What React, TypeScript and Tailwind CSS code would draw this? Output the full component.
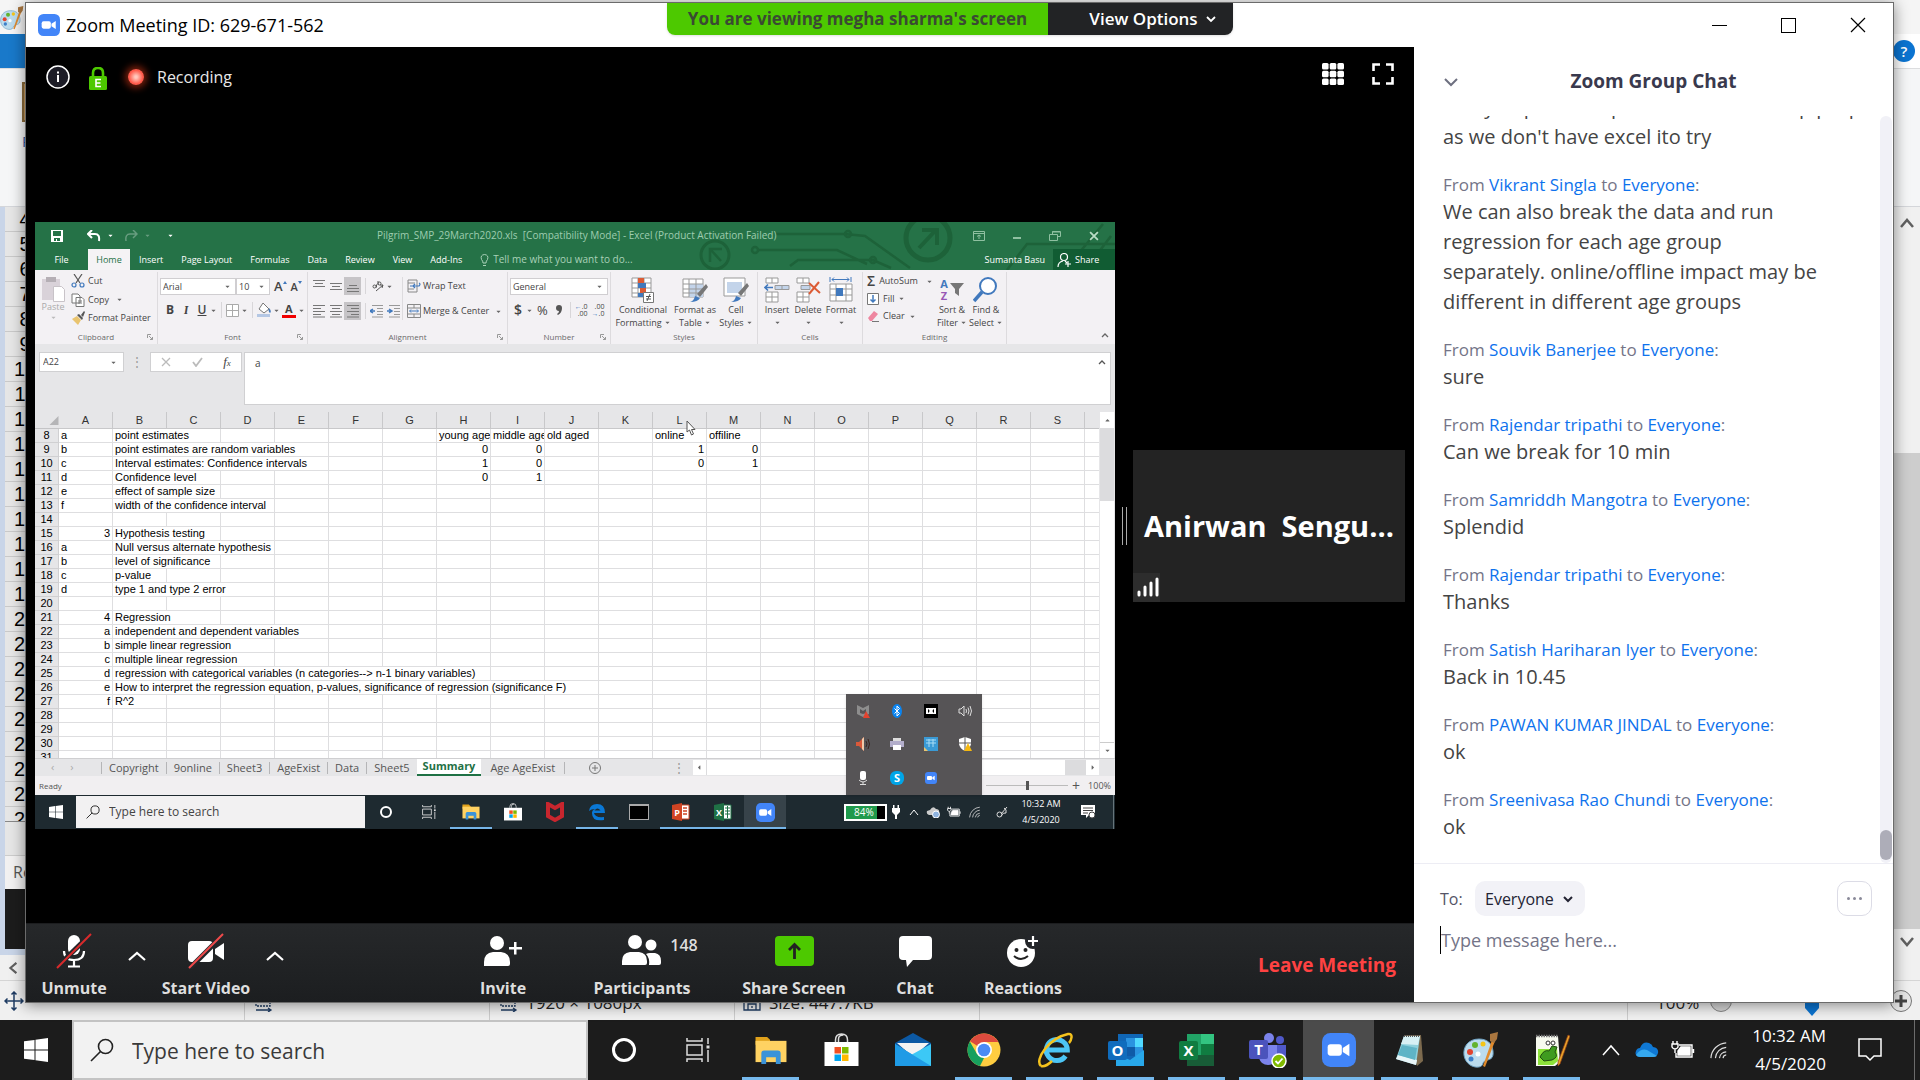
import React from "react";
import { FaCaretDown } from "react-icons/fa";

type Kids = { children?: React.ReactNode; className?: string };

const UI = "font-['Open_Sans','Noto_Sans',sans-serif]";

/* ---------- shared icons ---------- */

function ZoomLogo({ className = "" }: { className?: string }) {
  return (
    <svg viewBox="0 0 36 36" className={className} aria-hidden="true">
      <rect width="36" height="36" rx="9" fill="#4285f8" />
      <rect x="6" y="12" width="15" height="12" rx="3" fill="#fff" />
      <path d="M22 16l7-4.500v13L22 20z" fill="#fff" />
    </svg>
  );
}

function WindowsLogo({ className = "" }: { className?: string }) {
  return (
    <svg viewBox="0 0 24 24" className={className} fill="#fff" aria-hidden="true">
      <path d="M0 3.300L10.500 1.900V11.500H0zM11.500 1.700L24 0V11.500H11.500zM0 12.500H10.500V22.100L0 20.700zM11.500 12.500H24V24L11.500 22.300z" />
    </svg>
  );
}

function SearchIcon({ className = "" }: { className?: string }) {
  return (
    <svg viewBox="0 0 24 24" className={className} fill="none" stroke="#222" strokeWidth="1.600" aria-hidden="true">
      <circle cx="15.500" cy="8.500" r="7" />
      <path d="M10.500 13.500L1 23" />
    </svg>
  );
}

function TaskViewIcon({ className = "" }: { className?: string }) {
  return (
    <svg viewBox="0 0 24 24" className={className} fill="none" stroke="#ddd" strokeWidth="1.500" aria-hidden="true">
      <path d="M1 0v3h15V0M1 24v-3h15v3M1 7h15v10H1zM22 0v6M22 12v12" />
      <path d="M20.500 9h3" strokeWidth="3" />
    </svg>
  );
}

function ExplorerIcon({ className = "" }: { className?: string }) {
  return (
    <svg viewBox="0 0 32 30" className={className} aria-hidden="true">
      <path d="M0 1h12l3 3v5H0z" fill="#e0a11b" />
      <path d="M0 5h32v22H0z" fill="#ffd262" />
      <path d="M6 29V18q0-3 3-3h14q3 0 3 3v11h-5v-7H11v7z" fill="#3b93d8" />
    </svg>
  );
}

function StoreIcon({ className = "" }: { className?: string }) {
  return (
    <svg viewBox="0 0 34 34" className={className} aria-hidden="true">
      <path d="M11 9V7q0-6 6-6t6 6v2M14 9V6q0-4 5-4" fill="none" stroke="#ddd" strokeWidth="1.500" />
      <path d="M0 9h34v24H0z" fill="#fff" />
      <path d="M10 14h6.500v6.500H10z" fill="#f25022" />
      <path d="M17.500 14H24v6.500h-6.500z" fill="#7fba00" />
      <path d="M10 21.500h6.500V28H10z" fill="#00a4ef" />
      <path d="M17.500 21.500H24V28h-6.500z" fill="#ffb900" />
    </svg>
  );
}

function MailIcon() {
  return (
    <svg viewBox="0 0 36 34" className="h-[34px] w-9" aria-hidden="true">
      <path d="M0 10L18 0l18 10v6H0z" fill="#0c59a4" />
      <path d="M2 10h32L18 24z" fill="#f3f3f3" />
      <path d="M0 11l36 22H0z" fill="#28a8ea" />
      <path d="M36 11v22H24L16 22z" fill="#3cc8f6" />
      <path d="M0 33V11l36 22z" fill="#1f9be6" />
    </svg>
  );
}

function ChromeIcon() {
  return (
    <svg viewBox="0 0 34 34" className="h-[34px] w-[34px]" aria-hidden="true">
      <circle cx="17" cy="17" r="16.500" fill="#ffcd40" />
      <path d="M17 17L3 8.200A16.500 16.500 0 0 1 31.400 9H17z" fill="#dd4b3e" />
      <path d="M2.800 8.500L10 21l7 4-4 8A16.500 16.500 0 0 1 2.800 8.500z" fill="#17a05e" />
      <circle cx="17" cy="17" r="8" fill="#fff" />
      <circle cx="17" cy="17" r="6.300" fill="#4a8af4" />
    </svg>
  );
}

function IEIcon() {
  return (
    <svg viewBox="0 0 36 36" className="h-9 w-9" fill="none" aria-hidden="true">
      <path d="M28.500 24a10.500 10.500 0 1 1 1.800-6H11" stroke="#4cc5f5" strokeWidth="5" />
      <path d="M4 34C-3 28 12 6 31 2c6-1 3 7 1 9" stroke="#f4c21d" strokeWidth="2.500" />
      <path d="M4 34c4 1 8-2 11-5" stroke="#f4c21d" strokeWidth="2.500" />
    </svg>
  );
}

function OutlookIcon() {
  return (
    <svg viewBox="0 0 36 34" className="h-[34px] w-9" aria-hidden="true">
      <path d="M10 1h25v30H10z" fill="#1066b5" />
      <path d="M18 5h9v9h-9z" fill="#2a93e0" />
      <path d="M27 5h8v9h-8z" fill="#50d9ff" />
      <path d="M18 14h9v9h-9z" fill="#0f5ba8" />
      <path d="M27 14h8v9h-8z" fill="#2a93e0" />
      <path d="M8 33V21l14 6 14-10v16z" fill="#28a8ea" />
      <rect y="8" width="19" height="19" rx="2" fill="#0f6cbd" />
      <text x="9.500" y="23" textAnchor="middle" fontSize="15" fontWeight="700" fill="#fff" fontFamily="Open Sans">O</text>
    </svg>
  );
}

function ExcelIcon() {
  return (
    <svg viewBox="0 0 36 34" className="h-[34px] w-9" aria-hidden="true">
      <path d="M8 1h14v32H8z" fill="#21a366" />
      <path d="M22 1h13v10H22z" fill="#33c481" />
      <path d="M22 11h13v11H22z" fill="#107c41" />
      <path d="M8 22h27v11H8z" fill="#185c37" />
      <rect y="8" width="19" height="19" rx="2" fill="#107c41" />
      <text x="9.500" y="23" textAnchor="middle" fontSize="15" fontWeight="700" fill="#fff" fontFamily="Open Sans">X</text>
    </svg>
  );
}

function TeamsIcon() {
  return (
    <svg viewBox="0 0 38 36" className="h-9 w-[38px]" aria-hidden="true">
      <circle cx="20" cy="6" r="5" fill="#7b83eb" />
      <circle cx="31" cy="8" r="4" fill="#5059c9" />
      <path d="M26 13h11v10q0 6-6 6h-5z" fill="#5059c9" />
      <path d="M10 13h18v12q-1 8-9 8-7 0-9-7z" fill="#7b83eb" />
      <rect y="8" width="19" height="19" rx="2" fill="#4b53bc" />
      <text x="9.500" y="23" textAnchor="middle" fontSize="15" fontWeight="700" fill="#fff" fontFamily="Open Sans">T</text>
      <circle cx="30" cy="29" r="7" fill="#7fba00" stroke="#fff" strokeWidth="1.500" />
      <path d="M26.500 29l2.500 2.500 4.500-5" stroke="#fff" strokeWidth="1.800" fill="none" />
    </svg>
  );
}

function NotepadIcon() {
  return (
    <svg viewBox="0 0 34 34" className="h-[34px] w-[34px]" aria-hidden="true">
      <path d="M12 2h16l2 26-6 5z" fill="#7c6a4e" />
      <path d="M11 3h16l-4 29L3 26z" fill="#8fd0dc" />
      <path d="M11 3h16l-2 9L8 11z" fill="#d7f0f4" />
      <path d="M3 26l20 6 1-5L5 22z" fill="#e9f6f8" />
      <path d="M9 12l15 3-2 12L5 22z" fill="#5fb4c6" />
      <path d="M11 3h16" stroke="#555" strokeWidth="2" strokeDasharray="1 1" />
    </svg>
  );
}

function PaletteIcon({ className = "" }: { className?: string }) {
  return (
    <svg viewBox="0 0 36 36" className={className} aria-hidden="true">
      <path d="M16 7C5 7 0 15 1 23s8 13 15 12c5-1 3-5 6-6 4-2 9-1 8-10C29 11 24 7 16 7z" fill="#bcdcee" stroke="#6fa3c4" />
      <circle cx="7" cy="20" r="3" fill="#e2432f" />
      <circle cx="12" cy="13" r="3" fill="#63b32e" />
      <circle cx="20" cy="12" r="2.500" fill="#f5c518" />
      <circle cx="8" cy="27" r="2.500" fill="#3d7fc8" />
      <circle cx="15" cy="22" r="2.500" fill="#fff" />
      <path d="M29 8l3 1-10 26-2-1z" fill="#e08a2c" />
      <path d="M27 2l8-2-1 7-3 4-4-2z" fill="#a9763f" />
    </svg>
  );
}

function NotepadPlusIcon() {
  return (
    <svg viewBox="0 0 36 34" className="h-[34px] w-9" aria-hidden="true">
      <path d="M2 3h22l2 26-5 4H2z" fill="#f7faef" />
      <path d="M2 3h22" stroke="#777" strokeWidth="2.500" strokeDasharray="1.500 1" />
      <path d="M4 16h19l1 12-5 4H4z" fill="#8ce23a" />
      <path d="M6 24q4-8 9-6l3-5 5 1-2 5q4 5-3 8l-8 1z" fill="#3f9b1f" stroke="#1f4d10" />
      <circle cx="14" cy="10" r="2" fill="#fff" stroke="#333" />
      <circle cx="19" cy="10" r="2" fill="#fff" stroke="#333" />
      <path d="M34 2l2 1-10 28-2 2v-4z" fill="#e9a32b" stroke="#8c3b12" strokeWidth=".7" />
    </svg>
  );
}

function WifiIcon({ className = "" }: { className?: string }) {
  return (
    <svg viewBox="0 0 20 20" className={className} fill="none" stroke="#ddd" strokeWidth="1.300" aria-hidden="true">
      <path d="M1 19A18 18 0 0 1 18 2M6 19A13 13 0 0 1 18 7M10.500 19A8 8 0 0 1 18 12M14.500 19a4 4 0 0 1 3.500-3.500" />
    </svg>
  );
}

function BatteryIcon({ className = "" }: { className?: string }) {
  return (
    <svg viewBox="0 0 24 20" className={className} fill="none" stroke="#fff" strokeWidth="1.400" aria-hidden="true">
      <path d="M8 5h13v12H5v-4M22.500 9v4" />
      <path d="M10 7h9v8H7V11z" fill="#fff" />
      <path d="M2 1v3M6 1v3M1 4h6v3q-1 2-3 2-2 0-3-2zM4 9v4" />
    </svg>
  );
}

function Caret({ className = "" }: { className?: string }) {
  return <FaCaretDown className={"h-[7px] w-[7px] shrink-0 text-[#666] " + className} aria-hidden="true" />;
}

/* ---------- shared Excel window ---------- */

function QuickBar() {
  return (
    <div className="flex h-[27px] items-center text-[#9fcdb0]">
      <div className="flex w-[300px] items-center pl-4 text-white">
        <button aria-label="Save">
          <svg viewBox="0 0 12 12" className="h-3 w-3" fill="#fff">
            <path fillRule="evenodd" d="M0 0h12v12H0zM2 1v5h8V1zM3 8v3h2V9h1v2h3V8z" />
          </svg>
        </button>
        <button aria-label="Undo" className="ml-6 flex items-center gap-1.5">
          <svg viewBox="0 0 14 12" className="h-3 w-[14px]" fill="none" stroke="#fff" strokeWidth="2">
            <path d="M5 0L1 4l4 4M1 4h7q5 0 4 7" />
          </svg>
          <Caret className="text-white" />
        </button>
        <button aria-label="Redo" className="ml-2.5 flex items-center gap-1.5 opacity-30">
          <svg viewBox="0 0 14 12" className="h-3 w-[14px]" fill="none" stroke="#fff" strokeWidth="1.500">
            <path d="M9 0l4 4-4 4M13 4H6q-5 0-4 7" />
          </svg>
          <Caret className="text-white" />
        </button>
        <button aria-label="Customize Quick Access Toolbar" className="ml-4">
          <Caret className="text-white" />
        </button>
      </div>
      <p className="flex-1 pl-[42px] text-[10px] whitespace-pre">Pilgrim_SMP_29March2020.xls  [Compatibility Mode] - Excel (Product Activation Failed)</p>
      <div className="flex w-[150px] items-center justify-between pr-4">
        <button aria-label="Ribbon Display Options" className="ml-2">
          <svg viewBox="0 0 12 10" className="h-2.5 w-3" fill="none" stroke="#8fc0a1">
            <path d="M.5.500h11v9H.5zM.5 2.500h11M6 8V4M4 5.500L6 4l2 1.500" />
          </svg>
        </button>
        <button aria-label="Minimize" className="mt-1 h-[2px] w-2 bg-[#8fc0a1]" />
        <button aria-label="Restore">
          <svg viewBox="0 0 12 11" className="h-[11px] w-3" fill="none" stroke="#8fc0a1">
            <path d="M.5 4.500h8v6h-8zM3.500 4.500v-3h8v5h-3M3 2h8" />
          </svg>
        </button>
        <button aria-label="Close Excel">
          <svg viewBox="0 0 9 9" className="h-2.5 w-2.5" stroke="#b9dcc6" strokeWidth="1.600">
            <path d="M1 1l7 7M8 1L1 8" />
          </svg>
        </button>
      </div>
    </div>
  );
}

const ribbonTabs = ["Insert", "Page Layout", "Formulas", "Data", "Review", "View", "Add-Ins"];

function TabBar() {
  return (
    <div className="flex h-[21px] items-center text-[9px] text-white">
      <button className="w-[53px] text-center">File</button>
      <button className="h-full w-[42px] bg-[#f5f3f5] text-[#1f7145]">Home</button>
      <div className="flex items-center gap-[18px] pl-[9px]">
        {ribbonTabs.map((t) => (
          <button key={t}>{t}</button>
        ))}
      </div>
      <label className="flex flex-1 items-center gap-1 pl-[18px] text-[10px]">
        <svg viewBox="0 0 9 12" className="h-3 w-[9px]" fill="none" stroke="#a9d1b8">
          <path d="M3 9Q3 7 1.500 5.500 0 1 4.500.500 9 1 7.500 5.500 6 7 6 9zM3 11.500h3" />
        </svg>
        <span className="sr-only">Tell me</span>
        <input className="w-40 bg-transparent placeholder:text-[#a9d1b8]" placeholder="Tell me what you want to do..." />
      </label>
      <span className="pr-2">Sumanta Basu</span>
      <button className="flex h-full w-[62px] items-center gap-1 bg-[#115c33] pl-1">
        <svg viewBox="0 0 14 14" className="h-3.5 w-3.5" fill="none" stroke="#fff" strokeWidth="1.200">
          <circle cx="7" cy="4" r="3.500" />
          <path d="M1 14q0-5 5-6M8 8l2 2M11 8v6M8 11h6" />
        </svg>
        Share
      </button>
    </div>
  );
}

function Circuit() {
  return (
    <svg viewBox="0 0 480 48" className="absolute top-0 right-0 h-12 w-[480px]" fill="none" stroke="#1d6239" strokeWidth="2.500" aria-hidden="true">
      <circle cx="80" cy="33" r="14" strokeWidth="3" />
      <path d="M75 40V27h12M76 28l10 11" />
      <circle cx="293" cy="16" r="22" strokeWidth="5" />
      <path d="M284 26l17-18M287 8h15v15" strokeWidth="4" />
      <path d="M140 12h70l20 2 45 32M122 28h80l30 14M155 44l8-6h75l18 8M372 48l20-26h88M430 48l38-46M450 48l26-34" />
      <circle cx="213" cy="12" r="3" />
      <circle cx="120" cy="28" r="3" />
      <circle cx="238" cy="38" r="3" />
    </svg>
  );
}

function Group({ label, width, launcher = true, children }: { label: string; width: string; launcher?: boolean; children: React.ReactNode }) {
  return (
    <div className={"flex shrink-0 flex-col border-r border-[#dddbde] " + width}>
      <div className="flex-1">{children}</div>
      <div className="relative flex h-[14px] items-center justify-center text-[8px] text-[#6a6a6a]">
        {label}
        {launcher && (
          <svg viewBox="0 0 6 6" className="absolute right-1 h-[6px] w-[6px]" fill="none" stroke="#999">
            <path d="M.5 4V.500H4M2 2l3.500 3.500M5.500 3v2.500H3" />
          </svg>
        )}
      </div>
    </div>
  );
}

function Lines({ kind }: { kind: string }) {
  const d: Record<string, string> = {
    top: "M0 1.500h12M2 4.500h8M0 7.500h12",
    mid: "M0 4.500h12M2 7.500h8M0 10.500h12",
    bot: "M2 6.500h8M0 9.500h12M0 12.500h12",
    left: "M0 1.500h12M0 4.500h8M0 7.500h12M0 10.500h8M0 13h12",
    center: "M0 1.500h12M2 4.500h8M0 7.500h12M2 10.500h8M0 13h12",
    right: "M0 1.500h12M4 4.500h8M0 7.500h12M4 10.500h8M0 13h12",
  };
  return (
    <svg viewBox="0 0 12 14" className="h-3.5 w-3" stroke="#777" aria-hidden="true">
      <path d={d[kind]} />
    </svg>
  );
}

function AlignButton({ kind, on = false }: { kind: string; on?: boolean }) {
  return (
    <button aria-label={"Align " + kind} className={"flex h-[18px] w-[17px] items-center justify-center " + (on ? "bg-[#c6c4c7]" : "")}>
      <Lines kind={kind} />
    </button>
  );
}

function Sep() {
  return <span className="h-4 w-px bg-[#d8d6d9]" />;
}

function BigButton({ icon, lines, width, last = true }: { icon: React.ReactNode; lines: string[]; width: string; last?: boolean }) {
  return (
    <button className={"flex flex-col items-center text-[9px] leading-[13px] whitespace-nowrap " + width}>
      <span className="flex h-[31px] items-center pt-1">{icon}</span>
      <span>{lines[0]}</span>
      <span className="flex h-[13px] items-center gap-0.5">
        {lines[1]}
        {last && <Caret />}
      </span>
    </button>
  );
}

function GridIcon({ kind }: { kind: string }) {
  return (
    <svg viewBox="0 0 26 26" className="h-[26px] w-[26px]" fill="none" aria-hidden="true">
      {kind === "cf" && (
        <g>
          <path d="M2 1h19v19H2zM2 6h19M2 11h19M2 16h19M8 1v19M14 1v19" stroke="#999" fill="#fff" />
          <path d="M8 1h6v5H8zM10 11h6v5h-6z" fill="#dc5b35" />
          <path d="M8 6h8v5H8zM8 16h5v4H8z" fill="#4179bd" />
          <path d="M13.500 15.500h10v10h-10z" fill="#fff" stroke="#777" />
          <path d="M16 19.500h5M16 22h5M20 17l-3 7" stroke="#555" />
        </g>
      )}
      {kind === "table" && (
        <g>
          <path d="M1 2h20v18H1z" fill="#fff" stroke="#999" />
          <path d="M7 7h14v13H7z" fill="#c3d4ea" />
          <path d="M1 7h20M1 12h20M1 16h20M7 2v18M14 2v18" stroke="#999" />
          <path d="M24 7l2 3-8 10-3-3z" fill="#777" />
          <path d="M8 25q4-1 5-6l5 2q-2 4-10 4z" fill="#4179bd" />
        </g>
      )}
      {kind === "cell" && (
        <g>
          <path d="M1 1h21v18H1z" fill="#fff" stroke="#999" />
          <path d="M4 5h15v11H4z" fill="#c3d4ea" />
          <path d="M24 6l2 3-8 10-3-3z" fill="#777" />
          <path d="M8 25q4-1 5-6l5 2q-2 4-10 4z" fill="#4179bd" />
        </g>
      )}
      {kind === "insert" && (
        <g stroke="#999">
          <path d="M2 1h12v5H2zM8 1v5M2 15h12v10H2zM8 15v10M2 20h12" fill="#fff" />
          <path d="M11 8.500h14v4H11zM18 8v5" fill="#c3d4ea" />
          <path d="M9 10.500H1M4 7.500l-3 3 3 3" stroke="#4179bd" strokeWidth="1.600" />
        </g>
      )}
      {kind === "delete" && (
        <g stroke="#999">
          <path d="M2 1h12v5H2zM8 1v5M2 15h12v10H2zM8 15v10M2 20h12" fill="#fff" />
          <path d="M6 8.500h9v4H6z" fill="#c3d4ea" />
          <path d="M14 6l11 10M24 5L14 17" stroke="#dc5b35" strokeWidth="2" />
        </g>
      )}
      {kind === "format" && (
        <g stroke="#999">
          <path d="M2 7h22v17H2zM2 12h22M2 18h22M8 7v17M18 7v17" fill="#fff" />
          <path d="M8 11h7v8H8z" fill="#4179bd" stroke="none" />
          <path d="M2 0v5M23 0v5M4 2.500h17M6 .5L4 2.500l2 2M19 .5l2 2-2 2" stroke="#4179bd" />
        </g>
      )}
      {kind === "find" && (
        <g stroke="#4179bd">
          <circle cx="15" cy="9" r="8" strokeWidth="2" fill="#fff" />
          <path d="M9 15l-8 9" strokeWidth="3.500" />
        </g>
      )}
    </svg>
  );
}

function SortIcon() {
  return (
    <span className="flex items-center gap-0.5">
      <span className="flex flex-col text-[11px] leading-[12px] font-bold">
        <span className="text-[#4179bd]">A</span>
        <span className="text-[#9858b5]">Z</span>
      </span>
      <svg viewBox="0 0 14 13" className="h-[13px] w-3.5" fill="#777" aria-hidden="true">
        <path d="M0 0h14L9 6v7l-4-3V6z" />
      </svg>
    </span>
  );
}

function Combo({ label, value, width }: { label: string; value: string; width: string }) {
  return (
    <span className={"flex h-[17px] items-center border border-[#d0ced1] bg-white pr-1 " + width}>
      <select aria-label={label} className="min-w-0 flex-1 appearance-none pl-0.5 text-[9px]">
        <option>{value}</option>
      </select>
      <Caret />
    </span>
  );
}

function Ribbon() {
  return (
    <div className="flex h-[74px] bg-[#f3f1f4] pt-0.5 text-[9px] text-[#444]">
      <Group label="Clipboard" width="w-[123px]">
        <div className="flex">
          <button className="flex w-9 flex-col items-center pt-1 text-[#aaa]">
            <svg viewBox="0 0 26 26" className="h-[26px] w-[26px]" aria-hidden="true">
              <path d="M2 3h18v21H2z" fill="#d9d2d9" />
              <path d="M6 1h10v5H6z" fill="#b5afb5" />
              <path d="M13.500 10.500h8l3 3v12h-11z" fill="#fff" stroke="#c8c3c8" />
            </svg>
            <span className="leading-[10px]">Paste</span>
            <Caret className="mt-0.5 text-[#bbb]" />
          </button>
          <div className="flex flex-col">
            <button className="flex h-[18px] items-center gap-[3px]">
              <svg viewBox="0 0 14 14" className="h-3.5 w-3.5" fill="none" stroke="#555" strokeWidth="1.200">
                <path d="M3 0l6 9M11 0L5 9" />
                <circle cx="3" cy="11" r="2" stroke="#4179bd" />
                <circle cx="11" cy="11" r="2" stroke="#4179bd" />
              </svg>
              Cut
            </button>
            <button className="flex h-[19px] items-center gap-[3px]">
              <svg viewBox="0 0 14 14" className="h-3.5 w-3.5" fill="#fff" stroke="#777">
                <path d="M1 1h6l2 2v7H1zM5 4.500h6l2 2v7H5zM7 8h4M7 10h4" />
              </svg>
              Copy <Caret className="ml-1" />
            </button>
            <button className="flex h-[18px] items-center gap-[3px] whitespace-nowrap">
              <svg viewBox="0 0 14 14" className="h-3.5 w-3.5">
                <path d="M1 8l5-3 4 4-3 5z" fill="#e9c46f" />
                <path d="M6 4l2-1 4 4-1 2zM10 4l3-4 1 1-2 5z" fill="#555" />
              </svg>
              Format Painter
            </button>
          </div>
        </div>
      </Group>

      <Group label="Font" width="w-[150px]">
        <div className="flex flex-col gap-1.5 pt-1.5 pl-0.5">
          <div className="flex items-center">
            <Combo label="Font" value="Arial" width="w-[76px]" />
            <Combo label="Font size" value="10" width="w-[34px]" />
            <button aria-label="Increase font size" className="ml-1 text-[13px] leading-none font-semibold">A</button>
            <svg viewBox="0 0 4 3" className="mb-2 h-[3px] w-1" fill="#4179bd" aria-hidden="true"><path d="M0 3l2-3 2 3z" /></svg>
            <button aria-label="Decrease font size" className="ml-1 text-[11px] leading-none font-semibold">A</button>
            <svg viewBox="0 0 4 3" className="mb-2 h-[3px] w-1" fill="#4179bd" aria-hidden="true"><path d="M0 0l2 3 2-3z" /></svg>
          </div>
          <div className="flex h-[18px] items-center pl-0.5 text-[12px]">
            <button className="w-4 font-bold">B</button>
            <button className="w-4 font-serif font-bold italic">I</button>
            <button className="w-4 font-semibold underline">U</button>
            <Caret className="mr-1" />
            <Sep />
            <button aria-label="Borders" className="ml-1">
              <svg viewBox="0 0 13 13" className="h-[13px] w-[13px]" fill="#fff" stroke="#aaa">
                <path d="M.5.500h12v12H.5zM6.500 0v13M0 6.500h13" />
              </svg>
            </button>
            <Caret className="mr-1 ml-0.5" />
            <Sep />
            <button aria-label="Fill color" className="ml-1">
              <svg viewBox="0 0 14 16" className="h-4 w-3.5">
                <path d="M6 1l6 6-5 4-5-4z" fill="#fff" stroke="#777" />
                <path d="M12 6q3 3 1 5-2-1-1-5" fill="#4179bd" />
                <path d="M0 12h13v3H0z" fill="#b4c7e4" />
              </svg>
            </button>
            <Caret className="ml-0.5" />
            <button aria-label="Font color" className="ml-0.5 flex h-4 items-center justify-center border-b-[3px] border-[#f00000] px-[3px] text-[11px] leading-none font-bold">A</button>
            <Caret className="ml-0.5" />
          </div>
        </div>
      </Group>

      <Group label="Alignment" width="w-[200px]">
        <div className="flex pt-[5px] pl-0.5">
          <div className="flex w-[92px] flex-col gap-[7px]">
            <div className="flex items-center">
              <AlignButton kind="top" />
              <AlignButton kind="mid" />
              <AlignButton kind="bot" on />
              <span className="w-1" />
              <Sep />
              <button aria-label="Orientation" className="ml-1.5 flex items-center gap-0.5">
                <svg viewBox="0 0 12 12" className="h-3 w-3" fill="none" stroke="#555">
                  <path d="M4 11L11 5M11 5l-3 0M11 5l-1 3" />
                  <circle cx="2.500" cy="6.500" r="1.500" />
                  <path d="M4.500 4.500v3M6 1v4" />
                  <circle cx="7.500" cy="3.500" r="1.500" />
                </svg>
                <Caret />
              </button>
            </div>
            <div className="flex items-center">
              <AlignButton kind="left" />
              <AlignButton kind="center" />
              <AlignButton kind="right" on />
              <span className="w-1" />
              <Sep />
              {["M5 7H0M3 5L0 7l3 2", "M0 7h5M2 5l3 2-3 2"].map((d) => (
                <button key={d} aria-label="Indent" className="ml-1">
                  <svg viewBox="0 0 13 14" className="h-3.5 w-[13px]" fill="none" stroke="#999">
                    <path d="M2 1.500h11M7 4.500h6M7 7.500h6M7 10.500h6M2 13h11" />
                    <path d={d} stroke="#4179bd" strokeWidth="1.500" />
                  </svg>
                </button>
              ))}
            </div>
          </div>
          <div className="flex flex-col gap-[7px] border-l border-[#dddbde] pl-1">
            <button className="flex h-[18px] items-center gap-0.5">
              <svg viewBox="0 0 14 14" className="h-3.5 w-3.5" fill="none" stroke="#888">
                <path d="M1 1h9v12H1zM1 4h7M1 10h6" />
                <path d="M3 7h9q2-2 0-3M8 5L6 7l2 2" stroke="#4179bd" strokeWidth="1.200" />
              </svg>
              Wrap Text
            </button>
            <button className="flex h-[18px] items-center gap-0.5 whitespace-nowrap">
              <svg viewBox="0 0 14 14" className="h-3.5 w-3.5" fill="none" stroke="#888">
                <path d="M.5.500h13v13H.5zM.5 4h13M.5 10h13M7 0v4M7 10v4" />
                <path d="M3 7h8M4 5.500L2.500 7 4 8.500M10 5.500L11.500 7 10 8.500" stroke="#4179bd" />
              </svg>
              Merge &amp; Center <Caret className="ml-1" />
            </button>
          </div>
        </div>
      </Group>

      <Group label="Number" width="w-[103px]">
        <div className="flex flex-col gap-1.5 pt-1.5 pl-0.5">
          <Combo label="Number format" value="General" width="w-[98px]" />
          <div className="flex h-[18px] items-center pl-1">
            <button className="text-[14px] leading-none font-semibold">$</button>
            <Caret className="mx-1" />
            <button className="text-[13px] leading-none">%</button>
            <button aria-label="Comma style" className="mx-2">
              <svg viewBox="0 0 6 10" className="h-2.5 w-1.5" fill="#555">
                <path d="M3 0a3 3 0 0 1 3 3q0 5-4 7l-1-1q2-1 2-3A3 3 0 0 1 3 0z" />
              </svg>
            </button>
            <Sep />
            <button aria-label="Increase decimal" className="ml-1 text-right text-[7px] leading-[7px]">
              <span className="font-bold text-[#4179bd]">←</span>.0
              <br />
              .00
            </button>
            <button aria-label="Decrease decimal" className="ml-1 text-right text-[7px] leading-[7px]">
              .00
              <br />
              <span className="font-bold text-[#4179bd]">→</span>.0
            </button>
          </div>
        </div>
      </Group>

      <Group label="Styles" width="w-[147px]" launcher={false}>
        <div className="flex justify-between px-1">
          <BigButton width="w-[56px]" icon={<GridIcon kind="cf" />} lines={["Conditional", "Formatting"]} />
          <BigButton width="w-[48px]" icon={<GridIcon kind="table" />} lines={["Format as", "Table"]} />
          <BigButton width="w-[34px]" icon={<GridIcon kind="cell" />} lines={["Cell", "Styles"]} />
        </div>
      </Group>

      <Group label="Cells" width="w-[105px]" launcher={false}>
        <div className="flex justify-between px-1">
          <BigButton width="w-[30px]" icon={<GridIcon kind="insert" />} lines={["Insert", ""]} />
          <BigButton width="w-[32px]" icon={<GridIcon kind="delete" />} lines={["Delete", ""]} />
          <BigButton width="w-[34px]" icon={<GridIcon kind="format" />} lines={["Format", ""]} />
        </div>
      </Group>

      <Group label="Editing" width="w-[144px]" launcher={false}>
        <div className="flex">
          <div className="flex w-[72px] flex-col pl-1">
            <button className="flex h-[18px] items-center gap-1">
              <span className="text-[14px] leading-none font-semibold">Σ</span>AutoSum
              <Caret className="ml-1" />
            </button>
            <button className="flex h-[17px] items-center gap-1">
              <svg viewBox="0 0 12 12" className="h-3 w-3" fill="#fff" stroke="#777">
                <path d="M.5.500h11v11H.5z" />
                <path d="M6 2v7M3.500 6.500L6 9l2.500-2.500" stroke="#4179bd" strokeWidth="1.500" fill="none" />
              </svg>
              Fill <Caret />
            </button>
            <button className="flex h-[18px] items-center gap-1">
              <svg viewBox="0 0 12 12" className="h-3 w-3">
                <path d="M1 8l6-7 4 3-6 7H3z" fill="#ee86a0" />
                <path d="M5 11.500h7" stroke="#777" />
              </svg>
              Clear <Caret />
            </button>
          </div>
          <BigButton width="w-[34px]" icon={<SortIcon />} lines={["Sort &", "Filter"]} />
          <BigButton width="w-[34px]" icon={<GridIcon kind="find" />} lines={["Find &", "Select"]} />
        </div>
      </Group>
      <div className="flex flex-1 items-end justify-end p-1.5">
        <svg viewBox="0 0 8 6" className="h-1.5 w-2" fill="none" stroke="#666" strokeWidth="1.300" aria-hidden="true">
          <path d="M1 5l3-3 3 3" />
        </svg>
      </div>
    </div>
  );
}

function FormulaBar() {
  return (
    <div className="flex h-[68px] items-start bg-[#e6e6e8] pt-2 pr-1 pl-1 text-[9px] text-[#444]">
      <span className="flex h-5 w-[85px] items-center border border-[#d0d0d2] bg-white pr-1.5">
        <input aria-label="Name box" defaultValue="A22" className="min-w-0 flex-1 pl-[3px]" />
        <Caret />
      </span>
      <span className="flex h-5 w-[26px] items-center justify-center text-[12px] text-[#999]">⋮</span>
      <div className="flex h-5 w-[92px] items-center justify-around border border-[#d0d0d2] bg-white">
        <button aria-label="Cancel">
          <svg viewBox="0 0 10 10" className="h-2.5 w-2.5" stroke="#bbb" strokeWidth="1.300">
            <path d="M1 1l8 8M9 1L1 9" />
          </svg>
        </button>
        <button aria-label="Enter">
          <svg viewBox="0 0 11 10" className="h-2.5 w-[11px]" stroke="#bbb" strokeWidth="1.800" fill="none">
            <path d="M1 5l3 4 6-8" />
          </svg>
        </button>
        <button className="font-['Liberation_Serif',serif] text-[13px] leading-4 italic">
          f<span className="text-[9px]">x</span>
        </button>
      </div>
      <div className="ml-0.5 flex h-[53px] flex-1 items-start border border-[#d0d0d2] bg-white">
        <textarea aria-label="Formula" defaultValue="a" className="h-full flex-1 resize-none px-2.5 py-1 text-[10px] leading-3" />
        <svg viewBox="0 0 8 6" className="mt-1.5 mr-1 h-1.5 w-2" fill="none" stroke="#555" strokeWidth="1.300" aria-hidden="true">
          <path d="M1 5l3-3 3 3" />
        </svg>
      </div>
    </div>
  );
}

const COLS = "ABCDEFGHIJKLMNOPQRS".split("");

type Cell = { text: string; span?: number; right?: boolean };
const r = (text: string): Cell => ({ text, right: true });

const rows: Record<number, Record<string, Cell>> = {
  8: { A: { text: "a" }, B: { text: "point estimates", span: 2 }, H: { text: "young aged" }, I: { text: "middle aged" }, J: { text: "old aged" }, L: { text: "online" }, M: { text: "offiline" } },
  9: { A: { text: "b" }, B: { text: "point estimates are random variables", span: 4 }, H: r("0"), I: r("0"), L: r("1"), M: r("0") },
  10: { A: { text: "c" }, B: { text: "Interval estimates: Confidence intervals", span: 4 }, H: r("1"), I: r("0"), L: r("0"), M: r("1") },
  11: { A: { text: "d" }, B: { text: "Confidence level", span: 2 }, H: r("0"), I: r("1") },
  12: { A: { text: "e" }, B: { text: "effect of sample size", span: 2 } },
  13: { A: { text: "f" }, B: { text: "width of the confidence interval", span: 3 } },
  15: { A: r("3"), B: { text: "Hypothesis testing", span: 2 } },
  16: { A: { text: "a" }, B: { text: "Null versus alternate hypothesis", span: 3 } },
  17: { A: { text: "b" }, B: { text: "level of significance", span: 2 } },
  18: { A: { text: "c" }, B: { text: "p-value" } },
  19: { A: { text: "d" }, B: { text: "type 1 and type 2 error", span: 3 } },
  21: { A: r("4"), B: { text: "Regression", span: 2 } },
  22: { A: r("a"), B: { text: "independent and dependent variables", span: 4 } },
  23: { A: r("b"), B: { text: "simple linear regression", span: 3 } },
  24: { A: r("c"), B: { text: "multiple linear regression", span: 3 } },
  25: { A: r("d"), B: { text: "regression with categorical variables (n categories--> n-1 binary variables)", span: 7 } },
  26: { A: r("e"), B: { text: "How to interpret the regression equation, p-values, significance of regression (significance F)", span: 9 } },
  27: { A: r("f"), B: { text: "R^2" } },
};

function SheetRow({ n }: { n: number }) {
  const data = rows[n] || {};
  const cells: React.ReactNode[] = [];
  for (let i = 0; i < COLS.length; ) {
    const c = data[COLS[i]];
    const span = c?.span ?? 1;
    cells.push(
      <td
        key={i}
        colSpan={span}
        className={"overflow-hidden border-r border-b border-[#dedee0] px-0.5 py-0 whitespace-nowrap " + (c?.right ? "text-right" : "text-left")}
      >
        {c?.text}
      </td>
    );
    i += span;
  }
  return (
    <tr className="h-[14px]">
      <th scope="row" className="border-r border-b border-[#d0d0d2] bg-[#e6e6e8] p-0 text-center font-normal">
        {n}
      </th>
      {cells}
      <td className="border-b border-[#dedee0]" />
    </tr>
  );
}

function Sheet() {
  return (
    <div className="flex bg-[#e6e6e8]">
      <div className="h-[346px] min-w-0 flex-1 overflow-hidden bg-white">
        <table className="w-full table-fixed border-separate border-spacing-0 font-['Liberation_Sans',Arial,sans-serif] text-[11px] leading-[13px] text-black">
          <colgroup>
            <col className="w-6" />
            {COLS.map((c) => (
              <col key={c} className="w-[54px]" />
            ))}
            <col />
          </colgroup>
          <thead>
            <tr className="h-[17px] bg-[#e6e6e8] text-[#333]">
              <th className="border-b border-[#c4c4c6] p-0">
                <svg viewBox="0 0 9 9" className="ml-auto h-[9px] w-[10px]" aria-hidden="true">
                  <path d="M9 0v9H0z" fill="#b5b5b7" />
                </svg>
              </th>
              {COLS.map((c) => (
                <th key={c} scope="col" className="border-r border-b border-[#c8c8ca] p-0 font-normal">
                  {c}
                </th>
              ))}
              <th className="border-b border-[#c4c4c6]" />
            </tr>
          </thead>
          <tbody>
            {Array.from({ length: 24 }, (_, i) => (
              <SheetRow key={i} n={i + 8} />
            ))}
          </tbody>
        </table>
      </div>
      <div className="flex w-4 flex-col items-center">
        <button aria-label="Scroll up" className="flex h-4 w-[14px] items-center justify-center bg-white">
          <Caret className="rotate-180" />
        </button>
        <span className="w-[14px] flex-1 bg-[#dcdcde]" />
        <span className="h-[241px] w-[14px] bg-white" />
        <button aria-label="Scroll down" className="flex h-4 w-[14px] items-center justify-center border-t border-[#ccc] bg-white">
          <Caret />
        </button>
      </div>
    </div>
  );
}

const sheets = ["Copyright", "9online", "Sheet3", "AgeExist", "Data", "Sheet5"];

function SheetTabs() {
  return (
    <div className="flex h-[18px] items-center border-t border-[#cfcfd1] bg-[#e6e6e8] text-[11px] text-[#555]">
      <span className="flex w-[66px] items-center gap-4 pl-4 text-[#aaa]">
        <span>‹</span>
        <span>›</span>
      </span>
      {sheets.map((s) => (
        <button key={s} className="border-l border-[#b5b5b7] px-[7px] leading-3">
          {s}
        </button>
      ))}
      <button className="flex h-full items-center border-b-2 border-[#1f7145] bg-white px-[6px] font-bold text-[#1f7145]">Summary</button>
      <button className="border-r border-[#b5b5b7] px-[9px] leading-3">Age AgeExist</button>
      <button aria-label="New sheet" className="ml-6">
        <svg viewBox="0 0 12 12" className="h-3 w-3" fill="none" stroke="#777">
          <circle cx="6" cy="6" r="5.500" />
          <path d="M6 3v6M3 6h6" />
        </svg>
      </button>
      <span className="flex-1 pr-2 text-right text-[12px] leading-4 text-[#999]">⋮</span>
      <div className="flex h-[15px] w-[406px] bg-[#dcdcde]">
        <button aria-label="Scroll left" className="flex w-[13px] items-center justify-center bg-white">
          <Caret className="rotate-90" />
        </button>
        <span className="ml-px w-[358px] bg-white" />
        <span className="flex-1" />
        <button aria-label="Scroll right" className="flex w-[13px] items-center justify-center bg-white">
          <Caret className="-rotate-90" />
        </button>
      </div>
      <span className="w-4" />
    </div>
  );
}

function Tray({ children, className = "" }: Kids) {
  return <span className={"flex shrink-0 items-center justify-center " + className}>{children}</span>;
}

function HiddenIcons() {
  const small = "h-[14px] w-[14px]";
  return (
    <div className="absolute right-[133px] bottom-[34px] grid h-[101px] w-[136px] grid-cols-4 place-items-center bg-[#565456] shadow">
      <svg viewBox="0 0 14 14" className={small}><path d="M1 1l6 3 6-3v9l-6 3-6-3z" fill="#8d8d8d" /><path d="M4 5l3 2 3-2v4l-3 1-3-1z" fill="#565456" /><path d="M10 7l4 7H7z" fill="#e2432f" /></svg>
      <svg viewBox="0 0 14 14" className={small}><ellipse cx="7" cy="7" rx="5" ry="7" fill="#0a84f0" /><path d="M4.500 4.500l5 5L7 12V2l2.500 2.500-5 5" fill="none" stroke="#fff" /></svg>
      <svg viewBox="0 0 14 14" className={small}><path d="M0 0h14v14H0z" /><path d="M2 4h10v6H2z" fill="#fff" /><path d="M4 5q3 2 0 4zM10 5q-3 2 0 4z" /></svg>
      <svg viewBox="0 0 14 14" className={small} fill="none" stroke="#ddd"><path d="M1 5h2l3-3v10L3 9H1zM8 5q1 2 0 4M10 3.500q2 3.500 0 7M12 2q3 5 0 10" /></svg>
      <svg viewBox="0 0 14 14" className={small}><path d="M0 5h3l5-5v14L3 9H0z" fill="#d9593a" /><path d="M6 2l2-2v14l-2-2z" fill="#f0c9a8" /><path d="M10 4q2 3 0 6M12 2q3 5 0 10" stroke="#3a2420" fill="none" /></svg>
      <svg viewBox="0 0 14 14" className={small}><path d="M3 1h8v4H3z" fill="#ddd" /><path d="M0 4h14v6H0z" fill="#b3aecb" /><path d="M3 8h8v5H3z" fill="#fff" /></svg>
      <svg viewBox="0 0 14 14" className={small}><path d="M0 0h14v14H0z" fill="#3a9ad5" /><path d="M2 3h10M2 6h10M5 2v8M9 2v8" stroke="#a9dcf5" /><path d="M0 10l4 4H0z" fill="#e9c46f" /></svg>
      <svg viewBox="0 0 14 14" className={small}><path d="M7 0l6 2v5q-1 5-6 7-5-2-6-7V2z" fill="#fff" /><path d="M7 0v14M1 6h12" stroke="#555" /><path d="M10 6l4 8H6z" fill="#f5b80f" /></svg>
      <svg viewBox="0 0 14 14" className={small}><rect x="4" width="6" height="9" rx="2" fill="#fff" /><path d="M3 9q4 4 8 0M7 11v3M4 13.500h6" stroke="#ddd" fill="none" /></svg>
      <svg viewBox="0 0 14 14" className={small}><rect width="14" height="14" rx="6" fill="#00a5e8" /><text x="7" y="11" textAnchor="middle" fontSize="11" fontWeight="700" fill="#fff" fontFamily="Open Sans">S</text></svg>
      <ZoomLogo className="h-3 w-3" />
    </div>
  );
}

function SharedTaskbar() {
  const item = "flex h-full w-[42px] shrink-0 items-center justify-center";
  const open = " border-b-2 border-[#76b5e8] pt-0.5";
  return (
    <div className="flex h-[34px] items-center bg-[#1e2a30] text-[9px] text-white">
      <button aria-label="Start" className="flex w-[41px] justify-center">
        <WindowsLogo className="h-3.5 w-3.5" />
      </button>
      <label className="flex h-8 w-[289px] items-center gap-[9px] bg-[#f2f1f2] pl-2.5">
        <SearchIcon className="h-3.5 w-3.5" />
        <input aria-label="Search" placeholder="Type here to search" className="flex-1 text-[12px] placeholder:text-[#444]" />
      </label>
      <button aria-label="Cortana" className="flex w-[42px] justify-center">
        <span className="h-3 w-3 rounded-full border-2 border-white" />
      </button>
      <button aria-label="Task View" className="flex w-[43px] justify-center">
        <TaskViewIcon className="h-3.5 w-3.5" />
      </button>
      <button aria-label="Explorer" className={item + open}><ExplorerIcon className="h-4 w-[18px]" /></button>
      <button aria-label="Store" className={item}><StoreIcon className="h-[18px] w-5" /></button>
      <button aria-label="McAfee" className={item}>
        <svg viewBox="0 0 18 20" className="h-5 w-[18px]" fill="none" stroke="#c8262e" strokeWidth="4">
          <path d="M2 2l7 4 7-4v12l-7 4-7-4z" />
        </svg>
      </button>
      <button aria-label="Edge" className={item + open}>
        <svg viewBox="0 0 18 18" className="h-[18px] w-[18px]" fill="none">
          <path d="M1 8Q2 1 9 1q8 0 8 9H6q1 5 10 4v3Q4 19 4 10q0-3 3-4-4 0-6 2z" fill="#0a78d6" />
          <path d="M6.500 7.500q3-4 6 0z" fill="#1e2a30" />
        </svg>
      </button>
      <button aria-label="Command Prompt" className={item}>
        <span className="h-4 w-5 border border-t-2 border-[#aaa] bg-black" />
      </button>
      <button aria-label="PowerPoint" className={item + open}>
        <svg viewBox="0 0 18 18" className="h-[18px] w-[18px]"><path d="M9 2h8v14H9z" fill="#fff" stroke="#d04423" /><path d="M11 5h4M11 8h4M11 11h4" stroke="#d04423" strokeWidth="1.500" /><path d="M0 2l10-2v18L0 16z" fill="#d04423" /><text x="5" y="12.500" textAnchor="middle" fontSize="9" fontWeight="700" fill="#fff" fontFamily="Open Sans">P</text></svg>
      </button>
      <button aria-label="Excel" className={item + open}>
        <svg viewBox="0 0 18 18" className="h-[18px] w-[18px]"><path d="M9 2h8v14H9z" fill="#fff" stroke="#1f7145" /><path d="M11 5h5M11 8h5M11 11h5M13.500 3v12" stroke="#1f7145" /><path d="M0 2l10-2v18L0 16z" fill="#1f7145" /><text x="5" y="12.500" textAnchor="middle" fontSize="9" fontWeight="700" fill="#fff" fontFamily="Open Sans">X</text></svg>
      </button>
      <button aria-label="Zoom" className={item + open + " bg-[#37434a]"}><ZoomLogo className="h-[19px] w-[19px]" /></button>
      <div className="flex h-full flex-1 items-center justify-end">
        <span className="flex h-[17px] w-[43px] items-center border-2 border-white bg-[linear-gradient(90deg,#1f9a4c_80%,#000_80%)] pl-2 text-[10px]">84%</span>
        <Tray className="w-[18px]">
          <svg viewBox="0 0 8 14" className="h-3.5 w-2" fill="#fff"><path d="M1 0h1.500v3h3V0H7v3h1v4L5 10v4H3v-4L0 7V3h1z" /></svg>
        </Tray>
        <Tray className="w-[18px]">
          <svg viewBox="0 0 10 8" className="h-2 w-2.5" fill="none" stroke="#fff"><path d="M1 7l4-5 4 5" /></svg>
        </Tray>
        <Tray className="w-5">
          <svg viewBox="0 0 14 12" className="h-3 w-3.5"><path d="M3 9q-3-1-2-4l3-1q3-5 6-1 4 0 3 4l-2 2z" fill="#ccc" /><circle cx="10" cy="8.500" r="3.500" fill="#8fb4e0" stroke="#fff" /></svg>
        </Tray>
        <Tray className="w-[21px]"><BatteryIcon className="h-3 w-3.5" /></Tray>
        <Tray className="w-[21px]"><WifiIcon className="h-3 w-3" /></Tray>
        <Tray className="w-[34px]">
          <svg viewBox="0 0 12 12" className="h-3 w-3" fill="none" stroke="#ddd"><circle cx="3.500" cy="8.500" r="2.500" /><path d="M5 8l6-7M5 10q2-4 5-3M8 2q3 1 2 5" /></svg>
        </Tray>
        <span className="w-[44px] shrink-0 text-center leading-4 whitespace-nowrap">
          10:32 AM
          <br />
          4/5/2020
        </span>
        <Tray className="w-[50px]">
          <svg viewBox="0 0 14 14" className="h-3.5 w-3.5"><path d="M0 0h14v10H8l-3 3v-3H0z" fill="#fff" /><path d="M2 3h10M2 5.500h10M2 8h5" stroke="#444" /><circle cx="11" cy="10" r="3" fill="#fff" stroke="#444" /></svg>
        </Tray>
        <span className="h-full w-0.5 border-l border-[#66747a]" />
      </div>
    </div>
  );
}

function SharedScreen() {
  return (
    <section aria-label="Shared screen" className={"relative min-w-0 flex-1 overflow-hidden " + UI}>
      <div className="relative bg-[#257247]">
        <Circuit />
        <div className="relative">
          <QuickBar />
          <TabBar />
        </div>
      </div>
      <Ribbon />
      <FormulaBar />
      <Sheet />
      <SheetTabs />
      <div className="flex h-[19px] items-center bg-[#f1eff1] pr-1 pl-1 text-[8px] text-[#555]">
        <span className="flex-1">Ready</span>
        <span className="relative h-px w-[82px] bg-[#bbb]">
          <span className="absolute -top-1 left-10 h-[9px] w-[3px] bg-[#555]" />
        </span>
        <span className="px-1 text-[14px] leading-none">+</span>
        <span className="pl-1 text-[9px]">100%</span>
      </div>
      <SharedTaskbar />
      <HiddenIcons />
      <svg viewBox="0 0 10 16" className="absolute top-[198px] left-[651px] h-4 w-2.5" fill="#fff" stroke="#555" aria-hidden="true">
        <path d="M1 1v11l2.500-2 2 5 2-1-2-4.500H9z" />
      </svg>
    </section>
  );
}

/* ---------- Zoom window ---------- */

function TitleBar() {
  return (
    <header className="flex h-11 shrink-0 items-start bg-white">
      <div className="flex h-full flex-1 items-center gap-1.5 pl-3">
        <ZoomLogo className="h-[22px] w-[22px]" />
        <h1 className="text-[18px] text-black">Zoom Meeting ID: 629-671-562</h1>
      </div>
      <div className="flex h-8 overflow-hidden rounded-b-lg text-[17px] shadow">
        <p className="flex w-[381px] items-center justify-center bg-[#4dc900] font-bold text-[#3a4a33]">You are viewing megha sharma's screen</p>
        <button className="flex w-[185px] items-center justify-center gap-2 bg-[#222325] pl-6 font-semibold text-white">
          View Options
          <svg viewBox="0 0 10 8" className="h-2 w-2.5" fill="none" stroke="#fff" strokeWidth="1.800"><path d="M1 2l4 4 4-4" /></svg>
        </button>
      </div>
      <div className="ml-1 flex h-full flex-1 items-center justify-end gap-[54px] pr-[27px]">
        <button aria-label="Minimize"><span className="block h-px w-[15px] bg-black" /></button>
        <button aria-label="Maximize"><span className="block h-[15px] w-[15px] border border-black" /></button>
        <button aria-label="Close">
          <svg viewBox="0 0 16 16" className="h-4 w-4" stroke="#000" strokeWidth="1.200"><path d="M1 1l14 14M15 1L1 15" /></svg>
        </button>
      </div>
    </header>
  );
}

function MeetingInfo() {
  return (
    <div className="flex h-[81px] w-full items-start px-5 pt-[18px] text-[#e8e8e8]">
      <button aria-label="Meeting information">
        <svg viewBox="0 0 24 24" className="h-6 w-6" fill="#1c1c26" stroke="#fff" strokeWidth="1.500">
          <circle cx="12" cy="12" r="11" />
          <path d="M12 10v7M12 6.500v2" strokeWidth="2" />
        </svg>
      </button>
      <svg viewBox="0 0 18 23" className="mt-0.5 ml-[19px] h-[23px] w-[18px]" aria-hidden="true">
        <path d="M4 11V6q0-5 5-5t5 5v5" fill="none" stroke="#4dc900" strokeWidth="2.600" />
        <rect y="9" width="18" height="14" rx="1.500" fill="#4dc900" />
        <path d="M12 12.500H7v7h5M7 16h4.500" fill="none" stroke="#fff" strokeWidth="1.600" />
      </svg>
      <span className="mt-1 ml-[21px] h-4 w-4 rounded-full bg-[radial-gradient(circle,#ffc9bd_10%,#ff5a4a_60%)] shadow-[0_0_7px_3px_#7a1f0c]" />
      <span className="ml-[13px] text-[16px] leading-6">Recording</span>
      <span className="flex-1" />
      <button aria-label="Gallery view" className="-mt-0.5 mr-7">
        <svg viewBox="0 0 22 22" className="h-[22px] w-[22px]" fill="#fff">
          {[0, 7.7, 15.4].map((y) => [0, 7.7, 15.4].map((x) => <rect key={x + "-" + y} x={x} y={y} width="6.600" height="6.600" rx="1.500" />))}
        </svg>
      </button>
      <button aria-label="Full screen" className="-mt-0.5">
        <svg viewBox="0 0 22 22" className="h-[22px] w-[22px]" fill="none" stroke="#fff" strokeWidth="2.600">
          <path d="M1.500 8V1.500H8M14 1.500h6.500V8M20.500 14v6.500H14M8 20.500H1.500V14" />
        </svg>
      </button>
    </div>
  );
}

function ToolButton({ label, width, icon, badge }: { label: string; width: string; icon: React.ReactNode; badge?: string }) {
  return (
    <button className={"flex shrink-0 flex-col items-center " + width}>
      <span className="flex h-[52px] items-center pt-2 pb-1.5">
        {badge && <span className="mr-2 w-[30px]" />}
        {icon}
        {badge && <span className="mb-3 ml-1.5 w-8 text-[16px] leading-none font-semibold">{badge}</span>}
      </span>
      <span className="text-[16px] leading-6 font-bold whitespace-nowrap">{label}</span>
    </button>
  );
}

function UpCaret({ width, label }: { width: string; label: string }) {
  return (
    <button aria-label={label} className={"flex h-[64px] shrink-0 items-center justify-center " + width}>
      <svg viewBox="0 0 20 12" className="h-3 w-5" fill="none" stroke="#fff" strokeWidth="2.200"><path d="M2 10l8-7 8 7" /></svg>
    </button>
  );
}

function Controls() {
  return (
    <div className="flex h-[79px] shrink-0 items-start border-t border-[#1c1d1f] bg-[linear-gradient(#26282a,#1c1e20)] pr-[18px] text-[#dedede]">
      <ToolButton
        label="Unmute"
        width="w-[96px]"
        icon={
          <svg viewBox="0 0 36 36" className="h-9 w-9" fill="none">
            <rect x="12" y="2" width="12" height="20" rx="6" fill="#fff" />
            <path d="M8 18q0 9 10 9t10-9M18 27v6M12 33.500h12" stroke="#fff" strokeWidth="2.200" />
            <path d="M1 34L35 1" stroke="#24262a" strokeWidth="5" />
            <path d="M1 35L35 1" stroke="#d92a2a" strokeWidth="2" />
          </svg>
        }
      />
      <UpCaret width="w-[30px]" label="Audio options" />
      <ToolButton
        label="Start Video"
        width="w-[108px]"
        icon={
          <svg viewBox="0 0 38 36" className="h-9 w-[38px]">
            <rect x="1" y="8" width="25" height="21" rx="4" fill="#fff" />
            <path d="M28 16l9-6v17l-9-6z" fill="#fff" />
            <path d="M2 36L36 2" stroke="#24262a" strokeWidth="5" />
            <path d="M2 35L36 1" stroke="#f04a4a" strokeWidth="2" />
          </svg>
        }
      />
      <UpCaret width="w-[30px]" label="Video options" />
      <div className="flex min-w-0 flex-1 justify-center gap-6 pl-10">
        <ToolButton
          label="Invite"
          width="w-[80px]"
          icon={
            <svg viewBox="0 0 38 34" className="h-[34px] w-[38px]" fill="#fff">
              <circle cx="13" cy="9" r="7" />
              <path d="M0 32V28q0-9 9-10h8q9 1 9 10v2q0 2-2 2zM30 8h2.500v5H38v2.500h-5.500v5H30v-5h-5V13h5z" />
            </svg>
          }
        />
        <ToolButton
          label="Participants"
          width="w-[150px]"
          badge="148"
          icon={
            <svg viewBox="0 0 40 34" className="h-[34px] w-10" fill="#fff">
              <circle cx="13" cy="8" r="7" />
              <circle cx="29" cy="11" r="5.500" />
              <path d="M0 31v-4q0-8 8-9h9q8 1 8 9v2q0 2-2 2zM27 31q1-7-3-11 2-1 4-1h5q6 1 6 8v2q0 2-2 2z" />
            </svg>
          }
        />
        <ToolButton
          label="Share Screen"
          width="w-[106px]"
          icon={
            <svg viewBox="0 0 39 30" className="h-[30px] w-[39px]">
              <rect width="39" height="30" rx="4" fill="#4dc900" />
              <path d="M19.500 23V9M14 14l5.500-5.500L25 14" fill="none" stroke="#222" strokeWidth="2.800" />
            </svg>
          }
        />
        <ToolButton
          label="Chat"
          width="w-[88px]"
          icon={
            <svg viewBox="0 0 33 31" className="h-[31px] w-[33px]" fill="#fff">
              <path d="M4 0h25q4 0 4 4v16q0 4-4 4H14l-6 7-1-7H4q-4 0-4-4V4q0-4 4-4z" />
            </svg>
          }
        />
        <ToolButton
          label="Reactions"
          width="w-[80px]"
          icon={
            <svg viewBox="0 0 34 34" className="h-[34px] w-[34px]">
              <circle cx="15" cy="19" r="14" fill="#fff" />
              <circle cx="27" cy="7" r="8" fill="#24262a" />
              <path d="M27 2v10M22 7h10" stroke="#fff" strokeWidth="2.200" />
              <circle cx="10.500" cy="16" r="2" fill="#222" />
              <circle cx="19.500" cy="16" r="2" fill="#222" />
              <path d="M8 22q7 6 14 0" fill="none" stroke="#222" strokeWidth="2" />
            </svg>
          }
        />
      </div>
      <button className="ml-3.5 w-[186px] shrink-0 pt-[29px] text-right text-[19px] leading-6 font-bold whitespace-nowrap text-[#ff4242]">Leave Meeting</button>
    </div>
  );
}

type Msg = { from?: string; text: string[] };
const messages: Msg[] = [
  { text: ["Can you please explain each of the step properly", "as we don't have excel ito try"] },
  { from: "Vikrant Singla", text: ["We can also break the data and run", "regression for each age group", "separately. online/offline impact may be", "different in different age groups"] },
  { from: "Souvik Banerjee", text: ["sure"] },
  { from: "Rajendar tripathi", text: ["Can we break for 10 min"] },
  { from: "Samriddh Mangotra", text: ["Splendid"] },
  { from: "Rajendar tripathi", text: ["Thanks"] },
  { from: "Satish Hariharan Iyer", text: ["Back in 10.45"] },
  { from: "PAWAN KUMAR JINDAL", text: ["ok"] },
  { from: "Sreenivasa Rao Chundi", text: ["ok"] },
];

function ChatPanel() {
  return (
    <aside className="flex w-[479px] shrink-0 flex-col bg-white">
      <div className="relative flex h-[69px] shrink-0 items-center justify-center">
        <button aria-label="Collapse chat" className="absolute left-[30px]">
          <svg viewBox="0 0 14 10" className="h-2.5 w-3.5" fill="none" stroke="#6e7080" strokeWidth="2"><path d="M1 2l6 6 6-6" /></svg>
        </button>
        <h2 className="text-[19px] font-bold text-[#39394d]">Zoom Group Chat</h2>
      </div>
      <div className="flex min-h-0 flex-1">
        <ol className="flex min-w-0 flex-1 flex-col justify-end overflow-hidden pl-[29px]">
          {messages.map((m, i) => (
            <li key={i} className="mb-[21px] shrink-0 whitespace-nowrap">
              {m.from && (
                <p className="text-[17px] leading-6 text-[#747487]">
                  From <span className="text-[#0e72ed]">{m.from}</span> to <span className="text-[#0e72ed]">Everyone</span>:
                </p>
              )}
              {m.text.map((t) => (
                <p key={t} className="text-[20px] leading-[30px] text-[#444]">{t}</p>
              ))}
            </li>
          ))}
        </ol>
        <div className="flex w-3 flex-col justify-end rounded-full bg-[#f1f1f7] pb-[3px]">
          <span className="h-[30px] rounded-full bg-[#adadb8]" />
        </div>
        <span className="w-px" />
      </div>
      <div className="h-[139px] shrink-0 border-t border-[#ededf4] pr-[21px] pl-[26px]">
        <div className="flex items-center pt-[17px] text-[16px] text-[#555566]">
          <label htmlFor="chat-to" className="w-[35px]">To:</label>
          <span className="flex h-[35px] w-[110px] items-center rounded-[10px] bg-[#f2f2f7] pr-3 pl-2.5">
            <select id="chat-to" className="min-w-0 flex-1 appearance-none text-[#232333]">
              <option>Everyone</option>
            </select>
            <svg viewBox="0 0 10 8" className="h-2 w-2.5" fill="none" stroke="#232333" strokeWidth="2"><path d="M1 2l4 4 4-4" /></svg>
          </span>
          <span className="flex-1" />
          <button aria-label="More" className="flex h-[35px] w-[35px] items-center justify-center gap-[3px] rounded-[10px] border border-[#dcdce6]">
            <span className="h-[3px] w-[3px] rounded-full bg-[#8a8a99]" />
            <span className="h-[3px] w-[3px] rounded-full bg-[#8a8a99]" />
            <span className="h-[3px] w-[3px] rounded-full bg-[#8a8a99]" />
          </button>
        </div>
        <input aria-label="Message" placeholder="Type message here..." className="mt-2.5 h-7 w-full border-l border-black text-[18px] placeholder:text-[#747487]" />
      </div>
    </aside>
  );
}

function ZoomWindow() {
  return (
    <main className="absolute top-0.5 right-[26px] bottom-[77px] left-[25px] flex flex-col border border-[#6b6b6b] bg-white shadow-[0_2px_14px_rgba(0,0,0,0.45)]">
      <TitleBar />
      <div className="flex min-h-0 flex-1">
        <div className="flex min-w-0 flex-1 flex-col bg-black">
          <MeetingInfo />
          <div className="flex min-h-0 flex-1 items-center px-[9px]">
            <SharedScreen />
            <div className="flex h-[38px] w-[18px] justify-center gap-[3px]">
              <span className="w-px bg-[#aaa]" />
              <span className="w-px bg-[#aaa]" />
            </div>
            <div className="relative flex h-[152px] w-[272px] shrink-0 items-center justify-center bg-[#232323]">
              <p className="text-[29px] font-bold whitespace-pre text-white">Anirwan  Sengu...</p>
              <svg viewBox="0 0 27 29" className="absolute bottom-0 left-0 h-[29px] w-[27px] bg-[#2d2d2d]" stroke="#fff" strokeWidth="3" strokeLinecap="round" aria-hidden="true">
                <path d="M6 22v-3M12 22v-8M18 22V10M24 22V6" />
              </svg>
            </div>
          </div>
          <Controls />
        </div>
        <ChatPanel />
      </div>
    </main>
  );
}

/* ---------- Paint window behind ---------- */

const paintRows = Array.from({ length: 25 }, (_, i) => i + 4);

function PaintWindow() {
  return (
    <div className="flex min-h-0 flex-1 flex-col bg-[#f0f0f0]">
      <div className="flex h-[34px] shrink-0 bg-[#f5f5f5]">
        <PaletteIcon className="mt-1 h-7 w-6" />
      </div>
      <div className="flex h-[35px] shrink-0 items-center justify-between border-b border-[#dcdddf] bg-white">
        <button aria-label="File" className="h-[34px] w-[70px] bg-[#1979ca]" />
        <button aria-label="Help" className="mr-[5px] flex h-[22px] w-[22px] items-center justify-center rounded-full bg-[#0b74d1] text-[15px] font-semibold text-white">?</button>
      </div>
      <div className="h-[138px] shrink-0 border-b border-[#d4d6da] bg-[#f5f6f7] pt-[13px] pl-[22px]">
        <span className="block h-10 w-5 border-2 border-[#8a6a3a] bg-[#c89a5b]" />
        <span className="mt-2 block text-[15px] text-[#2b579a]">P</span>
      </div>
      <div className="flex min-h-0 flex-1 justify-between bg-[#c9d5e8] pl-[5px]">
        <div className="flex w-10 flex-col">
          <div className="h-[615px] overflow-hidden border-b border-[#888] bg-[#e6e6e6] font-['Liberation_Sans',Arial,sans-serif] text-[20px] leading-6 text-black">
            {paintRows.map((n) => (
              <p key={n} className="border-b border-[#c9c9c9] text-center">{n}</p>
            ))}
          </div>
          <div className="h-[34px] border-b border-[#ccc] bg-[#e6e6e6]" />
          <p className="h-[33px] bg-[#f2f1f1] pl-2 text-[16px] leading-[33px] text-[#555]">Ready</p>
          <div className="h-[60px] bg-[#1c1c1c]" />
        </div>
        <div className="flex w-[26px] flex-col items-center bg-[#f0f0f0]">
          <svg viewBox="0 0 14 10" className="my-[11px] h-2.5 w-3.5" fill="none" stroke="#606060" strokeWidth="2.500" aria-hidden="true"><path d="M1 9l6-7 6 7" /></svg>
          <div className="flex w-full flex-1 flex-col pt-[214px]"><span className="flex-1 bg-[#cdcdcd]" /></div>
          <svg viewBox="0 0 14 10" className="my-2 h-2.5 w-3.5" fill="none" stroke="#606060" strokeWidth="2.500" aria-hidden="true"><path d="M1 1l6 7 6-7" /></svg>
        </div>
      </div>
      <div className="flex h-[26px] shrink-0 items-center border-b border-[#d5d5d5] bg-[#f0f0f0] pl-2">
        <svg viewBox="0 0 10 14" className="h-3 w-2.5" fill="none" stroke="#606060" strokeWidth="2.500" aria-hidden="true"><path d="M9 1L2 7l7 6" /></svg>
      </div>
      <div className="flex h-[39px] shrink-0 items-center bg-[#f0f0f0] text-[17px] text-[#222]">
        <div className="flex h-full w-[245px] items-center border-r border-[#ccc] pl-1">
          <svg viewBox="0 0 20 20" className="h-5 w-5" fill="none" stroke="#1e3b62" strokeWidth="1.500" aria-hidden="true">
            <path d="M10 1v18M1 10h18M7.500 3.500L10 1l2.500 2.500M7.500 16.500L10 19l2.500-2.500M3.500 7.500L1 10l2.500 2.500M16.500 7.500L19 10l-2.500 2.500" />
          </svg>
        </div>
        {["", "1920 × 1080px"].map((t) => (
          <div key={t} className="flex h-full w-[245px] items-center gap-2 border-r border-[#ccc] pt-1 pl-2">
            <svg viewBox="0 0 20 18" className="h-[18px] w-5" fill="none" stroke="#1e3b62" strokeWidth="1.300" aria-hidden="true">
              <path d="M3 1h14v11H3z" strokeDasharray="2 1" />
              <path d="M3 16h15M15 14l3 2-3 2" />
            </svg>
            {t}
          </div>
        ))}
        <div className="flex h-full w-[245px] items-center gap-2 border-r border-[#ccc] pt-1 pl-2">
          <svg viewBox="0 0 18 16" className="h-4 w-[18px]" fill="none" stroke="#1e3b62" strokeWidth="1.300" aria-hidden="true">
            <path d="M1 1h16v14H1zM5 15V9h8v6M9 11v2" />
          </svg>
          Size: 447.7KB
        </div>
        <div className="flex-1" />
        <div className="flex h-full w-[293px] items-center border-l border-[#ccc] pl-7">
          <span className="w-[54px] pt-1">100%</span>
          <span className="h-[22px] w-[22px] rounded-full border border-[#888] bg-[#d5d5d5]" />
          <svg viewBox="0 0 14 22" className="mt-2 ml-[73px] h-[22px] w-3.5" fill="#0b74d1" aria-hidden="true"><path d="M0 0h14v14l-7 8-7-8z" /></svg>
          <span className="flex-1" />
          <span className="mr-2 flex h-[22px] w-[22px] items-center justify-center rounded-full border border-[#777] bg-[#e5e5e5]">
            <svg viewBox="0 0 12 12" className="h-3 w-3" stroke="#444" strokeWidth="3" aria-hidden="true"><path d="M6 0v12M0 6h12" /></svg>
          </span>
        </div>
      </div>
    </div>
  );
}

/* ---------- desktop taskbar ---------- */

const apps: { name: string; icon: React.ReactNode; open: boolean; active?: boolean }[] = [
  { name: "File Explorer", icon: <ExplorerIcon className="h-[29px] w-8" />, open: true },
  { name: "Microsoft Store", icon: <StoreIcon className="h-[34px] w-[35px]" />, open: false },
  { name: "Mail", icon: <MailIcon />, open: false },
  { name: "Chrome", icon: <ChromeIcon />, open: true },
  { name: "Internet Explorer", icon: <IEIcon />, open: true },
  { name: "Outlook", icon: <OutlookIcon />, open: true },
  { name: "Excel", icon: <ExcelIcon />, open: true },
  { name: "Teams", icon: <TeamsIcon />, open: true },
  { name: "Zoom", icon: <ZoomLogo className="h-[34px] w-[34px]" />, open: true, active: true },
  { name: "Notepad", icon: <NotepadIcon />, open: true },
  { name: "Paint", icon: <PaletteIcon className="h-9 w-9" />, open: true },
  { name: "Notepad++", icon: <NotepadPlusIcon />, open: true },
];

function Taskbar() {
  return (
    <footer className="flex h-[60px] shrink-0 items-center bg-[#1c1c1c] text-white">
      <button aria-label="Start" className="flex w-[72px] justify-center"><WindowsLogo className="h-6 w-6" /></button>
      <label className="flex h-[60px] w-[516px] items-center gap-[18px] border-2 border-[#c4c4c4] bg-[#f2f2f2] pl-4">
        <SearchIcon className="h-6 w-6" />
        <input aria-label="Search" placeholder="Type here to search" className="flex-1 pt-1 text-[21px] placeholder:text-[#3a3a3a]" />
      </label>
      <button aria-label="Cortana" className="flex w-[72px] justify-center"><span className="h-6 w-6 rounded-full border-[3px] border-white" /></button>
      <button aria-label="Task View" className="flex w-[75px] justify-center"><TaskViewIcon className="h-6 w-6" /></button>
      {apps.map((a) => (
        <button key={a.name} aria-label={a.name} className={"relative flex h-full w-[71px] items-center justify-center " + (a.active ? "bg-[#4b4b4b]" : "")}>
          {a.icon}
          {a.open && <span className={"absolute bottom-0 h-[3px] bg-[#76b9ed] " + (a.active ? "w-full" : "w-[57px]")} />}
        </button>
      ))}
      <div className="flex h-full flex-1 items-center justify-end">
        <Tray className="w-9">
          <svg viewBox="0 0 18 12" className="h-3 w-[18px]" fill="none" stroke="#fff" strokeWidth="1.500"><path d="M1 11l8-9 8 9" /></svg>
        </Tray>
        <Tray className="w-9">
          <svg viewBox="0 0 24 16" className="h-4 w-6"><path d="M5 15q-6-1-4-6 1-3 4-3 3-7 9-5 3 1 4 4 6 1 5 6-1 4-5 4z" fill="#0f78d4" /><path d="M1 13q5-7 11-5l10 6q-2 1-4 1H5q-3 0-4-2z" fill="#35a8ee" /></svg>
        </Tray>
        <Tray className="w-9"><BatteryIcon className="h-5 w-6" /></Tray>
        <Tray className="w-9"><WifiIcon className="h-[18px] w-[18px]" /></Tray>
        <span className="w-[89px] shrink-0 text-right text-[17px] leading-7 whitespace-nowrap">
          10:32 AM
          <br />
          4/5/2020
        </span>
        <Tray className="w-[88px]">
          <svg viewBox="0 0 24 24" className="h-6 w-6" fill="none" stroke="#fff" strokeWidth="1.500"><path d="M1 1h22v17h-7l-4 4-4-4H1z" /></svg>
        </Tray>
        <span className="h-full w-1.5 border-l border-[#6b6b6b]" />
      </div>
    </footer>
  );
}

export default function App() {
  return (
    <div className={"relative flex h-screen w-full flex-col overflow-hidden " + UI}>
      <PaintWindow />
      <Taskbar />
      <ZoomWindow />
    </div>
  );
}
